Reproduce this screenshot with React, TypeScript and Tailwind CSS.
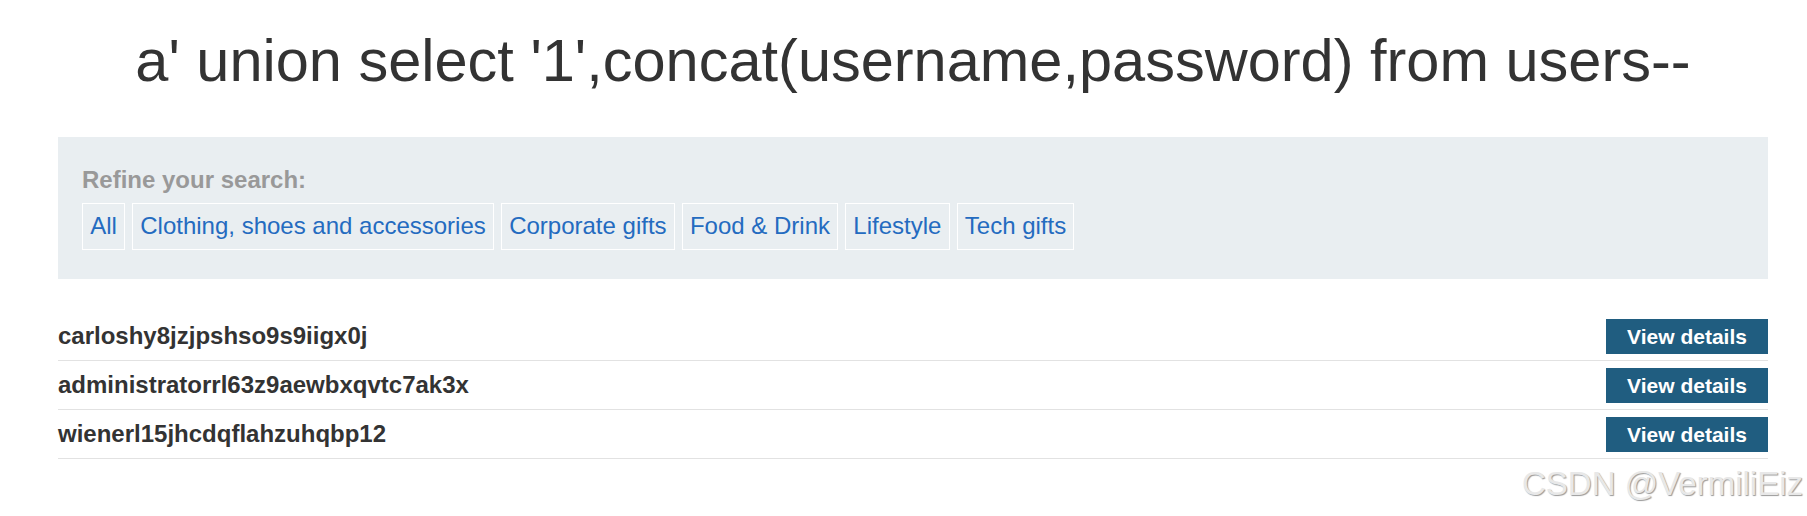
import React from 'react';

const filters = ['All', 'Clothing, shoes and accessories', 'Corporate gifts', 'Food & Drink', 'Lifestyle', 'Tech gifts'];

const rows = [
  'carloshy8jzjpshso9s9iigx0j',
  'administratorrl63z9aewbxqvtc7ak3x',
  'wienerl15jhcdqflahzuhqbp12',
];

export default function App() {
  return (
    <div className="relative w-[1807px] h-[516px] overflow-hidden bg-white font-['Liberation_Sans',Arial,sans-serif] text-[#333]">
      <div className="ml-[58px] w-[1710px] pt-[26px]">
        {/* Search term heading */}
        <h1 className="text-center text-[59.5px] leading-[69px] font-normal whitespace-nowrap">
          a' union select '1',concat(username,password) from users--
        </h1>

        {/* Filter panel */}
        <section className="mt-[42px] bg-[#e9eef1] px-[24px] py-[29px]">
          <div className="text-[24px] leading-[27.6px] font-bold text-[#999]">Refine your search:</div>
          <div className="mt-[9px] flex gap-[7px]">
            {filters.map((f) => (
              <a
                key={f}
                className="border border-white px-[7.2px] py-[8.7px] text-[24px] leading-[27.6px] text-[#246bc0] whitespace-nowrap"
              >
                {f}
              </a>
            ))}
          </div>
        </section>

        {/* Results table */}
        <div className="mt-[33.5px]">
          {rows.map((r) => (
            <div key={r} className="flex items-center justify-between border-b border-[#e2e2e2] py-[6.5px]">
              <span className="text-[24px] leading-[28px] font-bold text-[#333]">{r}</span>
              <button className="h-[35px] w-[162px] bg-[#205d80] text-center text-[21px] leading-[35px] font-bold text-white">
                View details
              </button>
            </div>
          ))}
        </div>
      </div>

      {/* Watermark */}
      <div className="absolute left-[1522px] top-[467px] whitespace-nowrap text-[33px] leading-none text-[#e8e8e8] [text-shadow:1px_1px_1px_#9a9a9a]">
        CSDN @VermiliEiz
      </div>
    </div>
  );
}
